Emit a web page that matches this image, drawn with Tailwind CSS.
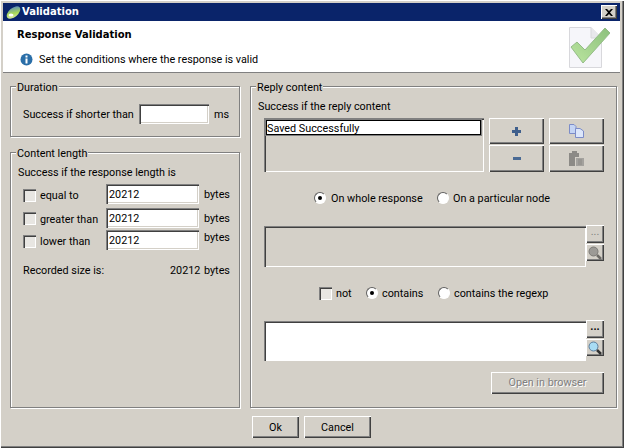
<!DOCTYPE html>
<html lang="en">
<head>
    <meta charset="UTF-8">
    <title>Validation</title>
    <script src="https://cdn.jsdelivr.net/npm/@tailwindcss/browser@4"></script>
</head>
<body class="bg-[#d4d0c8]">
<div class="w-[624px] h-[448px] flex flex-col pt-[3px] pl-[3px] pr-[4px] bg-[#d4d0c8] text-black text-[10.8px] leading-[14px] font-['Roboto',sans-serif] overflow-hidden shadow-[inset_1px_1px_0_#fff,inset_-1px_-1px_0_#404040,inset_-2px_-2px_0_#808080]">

    <!-- title bar -->
    <div class="h-[18px] shrink-0 bg-[#0a246a] flex items-center pl-[3px] pr-[3px] text-white font-bold text-[10px] font-['DejaVu_Sans',sans-serif]">
        <svg width="15" height="15" viewBox="0 0 15 15" class="mr-[1px]">
            <defs><linearGradient id="lg" x1="0" y1="1" x2="1" y2="0"><stop offset="0" stop-color="#f4f4c0"/><stop offset=".45" stop-color="#a8d858"/><stop offset="1" stop-color="#4a78d8"/></linearGradient></defs>
            <ellipse cx="7.5" cy="7.5" rx="8" ry="4.5" transform="rotate(-40 7.5 7.5)" fill="url(#lg)"/>
            <ellipse cx="5" cy="10" rx="2.5" ry="1.6" fill="#fff"/>
        </svg>
        <span class="grow">Validation</span>
        <div class="w-[16px] h-[14px] bg-[#d4d0c8] flex items-center justify-center shadow-[inset_1px_1px_0_#fff,inset_-1px_-1px_0_#404040,inset_-2px_-2px_0_#808080]">
            <svg width="8" height="7" viewBox="0 0 8 7"><path d="M0 0h2l2 2 2-2h2L5 3.500 8 7H6L4 5 2 7H0l3-3.500z" fill="#000"/></svg>
        </div>
    </div>

    <!-- header -->
    <div class="h-[52px] shrink-0 bg-white border-b border-[#808080] flex justify-between pl-[14px] pr-[10px]">
        <div>
            <div class="font-bold text-[10px] font-['DejaVu_Sans',sans-serif] mt-[7px]">Response Validation</div>
            <div class="flex items-center mt-[9px] ml-[3px]">
                <svg width="13" height="13" viewBox="0 0 13 13" class="mr-[6px]">
                    <circle cx="6.500" cy="6.500" r="6" fill="#2a6ea8"/>
                    <rect x="5.500" y="2.500" width="2" height="2" fill="#fff"/>
                    <rect x="5.500" y="5.500" width="2" height="5" fill="#fff"/>
                </svg>
                <span class="pt-[2px]">Set the conditions where the response is valid</span>
            </div>
        </div>
        <svg width="42" height="42" viewBox="0 0 42 42" class="mt-[6px]">
            <defs><linearGradient id="chk" x1="0" y1="1" x2="1" y2="0"><stop offset="0" stop-color="#bce6a0"/><stop offset="1" stop-color="#8cc07c"/></linearGradient></defs>
            <path d="M1.500 0.500H23L33.500 11V40.500H1.500z" fill="#f6f6fa" stroke="#d8d8dc"/>
            <path d="M23 0.500V11H33.500" fill="#e8e8ec" stroke="#d8d8dc"/>
            <path d="M3 20L9 15L17 23L37 1L42 6L15 36z" fill="url(#chk)" stroke="#94bc88"/>
        </svg>
    </div>

    <!-- body -->
    <div class="grow flex pl-[7px] pt-[13px]">
        <div class="w-[230px] shrink-0">
            <!-- duration -->
            <div class="relative h-[51px] border border-[#808080] shadow-[inset_1px_1px_0_#fff,1px_1px_0_#fff] pl-[12px] pt-[17px]">
                <span class="absolute -top-[6px] left-[5px] px-[1px] bg-[#d4d0c8]">Duration</span>
                <div class="flex items-center">
                    <span class="w-[116px] pt-[2px]">Success if shorter than</span>
                    <div class="w-[70px] h-[20px] bg-white shadow-[inset_1px_1px_0_#808080,inset_2px_2px_0_#404040,inset_-1px_-1px_0_#fff,inset_-2px_-2px_0_#d4d0c8]"></div>
                    <span class="ml-[5px] pt-[2px]">ms</span>
                </div>
            </div>

            <!-- content length -->
            <div class="relative h-[256px] mt-[15px] border border-[#808080] shadow-[inset_1px_1px_0_#fff,1px_1px_0_#fff] pl-[12px] pt-[13px]">
                <span class="absolute -top-[6px] left-[5px] px-[1px] bg-[#d4d0c8]">Content length</span>
                <div class="-ml-[5px] mb-[4px]">Success if the response length is</div>

                <div class="flex h-[20px] mb-[4px]">
                    <label class="w-[83px] flex items-center mt-[2px]">
                        <span class="size-[13px] mr-[4px] bg-[#e8e6e2] shadow-[inset_1px_1px_0_#808080,inset_2px_2px_0_#404040,inset_-1px_-1px_0_#fff]"></span>
                        <span class="pt-[2px]">equal to</span>
                    </label>
                    <div class="w-[93px] h-[20px] bg-white pl-[3px] pt-[4px] shadow-[inset_1px_1px_0_#808080,inset_2px_2px_0_#404040,inset_-1px_-1px_0_#fff,inset_-2px_-2px_0_#d4d0c8]">20212</div>
                    <span class="ml-[5px] mt-[4px]">bytes</span>
                </div>
                <div class="flex h-[20px] mb-[2px]">
                    <label class="w-[83px] flex items-center mt-[1px]">
                        <span class="size-[13px] mr-[4px] bg-[#e8e6e2] shadow-[inset_1px_1px_0_#808080,inset_2px_2px_0_#404040,inset_-1px_-1px_0_#fff]"></span>
                        <span class="pt-[2px]">greater than</span>
                    </label>
                    <div class="w-[93px] h-[20px] bg-white pl-[3px] pt-[4px] shadow-[inset_1px_1px_0_#808080,inset_2px_2px_0_#404040,inset_-1px_-1px_0_#fff,inset_-2px_-2px_0_#d4d0c8]">20212</div>
                    <span class="ml-[5px] mt-[4px]">bytes</span>
                </div>
                <div class="flex h-[20px]">
                    <label class="w-[83px] flex items-center mt-[2px]">
                        <span class="size-[13px] mr-[4px] bg-[#e8e6e2] shadow-[inset_1px_1px_0_#808080,inset_2px_2px_0_#404040,inset_-1px_-1px_0_#fff]"></span>
                        <span class="pt-[2px]">lower than</span>
                    </label>
                    <div class="w-[93px] h-[20px] bg-white pl-[3px] pt-[4px] shadow-[inset_1px_1px_0_#808080,inset_2px_2px_0_#404040,inset_-1px_-1px_0_#fff,inset_-2px_-2px_0_#d4d0c8]">20212</div>
                    <span class="ml-[5px] mt-[1px]">bytes</span>
                </div>
                <div class="flex mt-[14px]">
                    <span class="w-[147px]">Recorded size is:</span>
                    <span class="w-[34px]">20212</span>
                    <span>bytes</span>
                </div>
            </div>
        </div>

        <!-- reply content -->
        <div class="relative w-[367px] h-[322px] ml-[10px] border border-[#808080] shadow-[inset_1px_1px_0_#fff,1px_1px_0_#fff] pl-[13px] pt-[13px]">
            <span class="absolute -top-[6px] left-[5px] px-[1px] bg-[#d4d0c8]">Reply content</span>
            <div class="-ml-[6px] mb-[4px]">Success if the reply content</div>

            <div class="flex">
                <div class="w-[220px] h-[54px] p-[2px] shadow-[inset_1px_1px_0_#808080,inset_2px_2px_0_#404040,inset_-1px_-1px_0_#fff]">
                    <div class="h-[15px] w-[215px] bg-white border border-black leading-[15px] shadow-[0_0_0_1px_#808080]">Saved Successfully</div>
                </div>
                <div class="ml-[5px] grid grid-cols-[55px_55px] grid-rows-[26px_27px] gap-x-[5px] gap-y-[1px]">
                    <div class="flex items-center justify-center shadow-[inset_1px_1px_0_#fff,inset_-1px_-1px_0_#404040,inset_-2px_-2px_0_#808080]">
                        <svg width="9" height="9" viewBox="0 0 9 9"><path d="M3 0H6V3H9V6H6V9H3V6H0V3H3z" fill="#3f5f8c"/></svg>
                    </div>
                    <div class="flex items-center justify-center shadow-[inset_1px_1px_0_#fff,inset_-1px_-1px_0_#404040,inset_-2px_-2px_0_#808080]">
                        <svg width="15" height="14" viewBox="0 0 15 14">
                            <path d="M0.500 0.500H5L7 2.500V9.500H0.500z" fill="#c4d4f4" stroke="#7c8cc8"/>
                            <path d="M6.500 4.500H11L14.500 7V13.500H6.500z" fill="#dce6fa" stroke="#7c8cc8"/>
                        </svg>
                    </div>
                    <div class="flex items-center justify-center shadow-[inset_1px_1px_0_#fff,inset_-1px_-1px_0_#404040,inset_-2px_-2px_0_#808080]">
                        <div class="w-[8px] h-[3px] bg-[#4a6a94]"></div>
                    </div>
                    <div class="flex items-center justify-center shadow-[inset_1px_1px_0_#fff,inset_-1px_-1px_0_#404040,inset_-2px_-2px_0_#808080]">
                        <svg width="15" height="15" viewBox="0 0 15 15">
                            <path d="M0 2H3V0H8V2H10V6H6V15H0z" fill="#8c8a86"/>
                            <path d="M7 7H15V15H7z" fill="#a4a29e"/>
                            <path d="M9 9H13M9 11H13M9 13H13" stroke="#8c8a86"/>
                        </svg>
                    </div>
                </div>
            </div>

            <div class="flex items-center mt-[18px] ml-[50px]">
                <span class="size-[12px] mr-[5px] rounded-full bg-white border border-t-[#606060] border-l-[#606060] border-b-white border-r-white shadow-[0_0_0_1px_#d4d0c8] flex items-center justify-center"><span class="size-[4px] rounded-full bg-black"></span></span>
                <span class="w-[106px] pt-[2px]">On whole response</span>
                <span class="size-[12px] mr-[4px] rounded-full bg-white border border-t-[#606060] border-l-[#606060] border-b-white border-r-white"></span>
                <span class="pt-[2px]">On a particular node</span>
            </div>

            <div class="flex mt-[20px]">
                <div class="w-[322px] h-[41px] shadow-[inset_1px_1px_0_#808080,inset_2px_2px_0_#404040,inset_-1px_-1px_0_#fff]"></div>
                <div class="flex flex-col gap-[1px] -mt-[1px]">
                    <div class="w-[18px] h-[18px] text-center text-[#808080] leading-[14px] shadow-[inset_1px_1px_0_#fff,inset_-1px_-1px_0_#404040,inset_-2px_-2px_0_#808080]">...</div>
                    <div class="w-[18px] h-[17px] flex items-center justify-center shadow-[inset_1px_1px_0_#fff,inset_-1px_-1px_0_#404040,inset_-2px_-2px_0_#808080]">
                        <svg width="14" height="14" viewBox="0 0 14 14"><circle cx="5.500" cy="5.500" r="4.500" fill="#9c9a96" stroke="#7c7a76"/><path d="M9 9L13 13" stroke="#6c6a66" stroke-width="2.500"/></svg>
                    </div>
                </div>
            </div>

            <div class="flex items-center mt-[18px] ml-[55px]">
                <span class="size-[13px] mr-[4px] shadow-[inset_1px_1px_0_#808080,inset_2px_2px_0_#404040,inset_-1px_-1px_0_#fff] bg-[#e8e6e2]"></span>
                <span class="w-[30px] pt-[2px]">not</span>
                <span class="size-[12px] mr-[4px] rounded-full bg-white border border-t-[#606060] border-l-[#606060] border-b-white border-r-white flex items-center justify-center"><span class="size-[4px] rounded-full bg-black"></span></span>
                <span class="w-[56px] pt-[2px]">contains</span>
                <span class="size-[12px] mr-[4px] rounded-full bg-white border border-t-[#606060] border-l-[#606060] border-b-white border-r-white"></span>
                <span class="pt-[2px]">contains the regexp</span>
            </div>

            <div class="flex mt-[20px]">
                <div class="w-[322px] h-[40px] bg-white shadow-[inset_1px_1px_0_#808080,inset_2px_2px_0_#404040,inset_-1px_-1px_0_#fff]"></div>
                <div class="flex flex-col gap-[1px] -mt-[1px]">
                    <div class="w-[18px] h-[18px] text-center leading-[14px] font-bold shadow-[inset_1px_1px_0_#fff,inset_-1px_-1px_0_#404040,inset_-2px_-2px_0_#808080]">...</div>
                    <div class="w-[18px] h-[17px] flex items-center justify-center shadow-[inset_1px_1px_0_#fff,inset_-1px_-1px_0_#404040,inset_-2px_-2px_0_#808080]">
                        <svg width="14" height="14" viewBox="0 0 14 14"><circle cx="5.500" cy="5.500" r="4.500" fill="#a8dcf4" stroke="#5c7c9c"/><path d="M9 9L13 13" stroke="#303030" stroke-width="2.500"/></svg>
                    </div>
                </div>
            </div>

            <div class="ml-[227px] mt-[11px] w-[113px] h-[22px] flex items-center justify-center text-[#808080] [text-shadow:1px_1px_0_#fff] shadow-[inset_1px_1px_0_#fff,inset_-1px_-1px_0_#404040,inset_-2px_-2px_0_#808080]">Open in browser</div>
        </div>
    </div>

    <!-- footer -->
    <div class="h-[32px] shrink-0 flex gap-[5px] pl-[249px]">
        <div class="w-[47px] h-[22px] pt-[2px] flex items-center justify-center shadow-[inset_1px_1px_0_#fff,inset_-1px_-1px_0_#404040,inset_-2px_-2px_0_#808080]">Ok</div>
        <div class="w-[67px] h-[22px] pt-[2px] flex items-center justify-center shadow-[inset_1px_1px_0_#fff,inset_-1px_-1px_0_#404040,inset_-2px_-2px_0_#808080]">Cancel</div>
    </div>
</div>
</body>
</html>
